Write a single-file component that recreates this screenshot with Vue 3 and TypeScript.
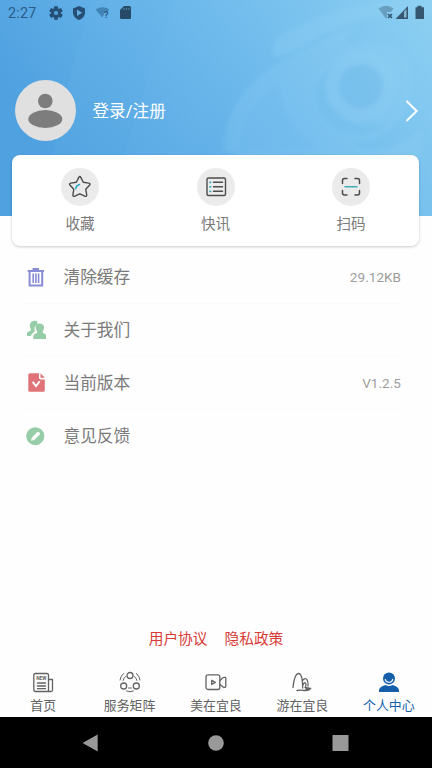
<script setup lang="ts">
interface Row { id: string; label: string; value?: string }
interface Item { id: string; label: string }

const shortcuts: Item[] = [
  { id: 'star', label: '收藏' },
  { id: 'news', label: '快讯' },
  { id: 'scan', label: '扫码' },
]
const rows: Row[] = [
  { id: 'trash', label: '清除缓存', value: '29.12KB' },
  { id: 'people', label: '关于我们' },
  { id: 'version', label: '当前版本', value: 'V1.2.5' },
  { id: 'feedback', label: '意见反馈' },
]
const tabs: Item[] = [
  { id: 'home', label: '首页' },
  { id: 'matrix', label: '服务矩阵' },
  { id: 'video', label: '美在宜良' },
  { id: 'travel', label: '游在宜良' },
  { id: 'me', label: '个人中心' },
]
const active = 'me'
</script>

<template>
  <div class="screen">
    <header class="hero">
      <svg class="art" viewBox="0 0 432 216" preserveAspectRatio="none" aria-hidden="true">
        <defs>
          <linearGradient id="sky" x1="0" y1="0.35" x2="1" y2="0">
            <stop offset="0" stop-color="#4fa1e0" />
            <stop offset="0.5" stop-color="#6db9ec" />
            <stop offset="1" stop-color="#8dd0f2" />
          </linearGradient>
          <linearGradient id="ray" x1="0" y1="0" x2="1" y2="0">
            <stop offset="0" stop-color="#8accf5" stop-opacity="0.08" />
            <stop offset="1" stop-color="#8accf5" stop-opacity="0" />
          </linearGradient>
          <filter id="soft"><feGaussianBlur stdDeviation="2" /></filter>
        </defs>
        <rect width="432" height="216" fill="url(#sky)" />
        <path d="M92 0H175L148 70L100 216H40L72 68Z" fill="url(#ray)" />
        <path d="M175 0H260L170 216H105L150 70Z" fill="url(#ray)" />
        <g filter="url(#soft)" opacity=".68">
          <path d="M274 57C271 42 278 33 296 29C326 10 360 3 412 0L432 0V14C390 8 350 20 318 38C301 48 288 55 274 57Z" fill="#98d5f6" opacity=".38" />
          <path d="M224 150C222 117 244 82 283 61C318 43 335 32 357 28C344 39 342 46 359 43C393 38 413 56 412 82C411 119 383 143 350 142C375 158 399 147 421 130V156H285C266 156 249 163 238 155Z" fill="#9ad5f7" opacity=".27" />
          <path d="M238 151C239 124 253 99 279 83C284 110 296 137 325 150Z" fill="#62afe6" opacity=".22" />
          <path d="M334 66C316 73 308 101 326 122C343 140 377 139 391 120C370 131 347 125 334 109C324 96 323 80 334 66Z" fill="#60b2e6" opacity=".26" />
          <circle cx="361" cy="86" r="29" fill="none" stroke="#a0d8f8" stroke-width="13" opacity=".22" />
          <circle cx="361" cy="86" r="22" fill="#63b1e5" opacity=".34" />
        </g>
      </svg>
      <div class="status">
        <span class="clock">2:27</span>
        <svg class="status-left" viewBox="48 0 90 26" width="90" height="26">
          <g transform="translate(56 13)" fill="#254f75">
            <rect v-for="a in [0, 60, 120]" :key="a" x="-2" y="-6.8" width="4" height="13.6" rx=".7" :transform="`rotate(${a})`" />
            <circle r="4.900" /><circle r="2.100" fill="#55a5e0" />
          </g>
          <path d="M79 6L85 8.400V12C85 16 82.600 18.700 79 20C75.400 18.700 73 16 73 12V8.400Z" fill="#254f75" />
          <path d="M77 9.600V16L82.200 12.800Z" fill="#65aee1" />
          <path d="M95.500 9.600Q102.500 4.700 109.500 9.600L107 12Q104.500 11 104 14L102.500 17.700Z" fill="#4384b8" />
          <text x="104" y="18" fill="#285a86" font-family="Roboto" font-size="9" font-weight="700">?</text>
          <path d="M124 6H129.500Q131 6 131 7.500V17.500Q131 19 129.500 19H121.500Q120 19 120 17.500V10Z" fill="#254966" />
          <path d="M124 7.800V10M126.500 7.800V10M129 7.800V10" stroke="#568bb2" stroke-width="1" />
        </svg>
        <svg class="status-right" viewBox="376 0 56 26" width="56" height="26">
          <path d="M378.500 8.500Q386 3 393.500 8.500L391 12H387V17.500L385.800 18.500Z" fill="#679fbe" />
          <path d="M388 14L392 18M392 14L388 18" stroke="#2c526d" stroke-width="1.500" />
          <path d="M408 6V19H395.500Z" fill="#355770" /><path d="M404 11.500L406.500 9V17.500H404Z" fill="#83b9d6" />
          <path d="M417.500 5.700H421.500V7.200H424V19H415.500V7.200H417.500Z" fill="#355770" />
        </svg>
      </div>
      <div class="profile">
        <svg class="avatar" viewBox="0 0 61 61"><circle cx="30.500" cy="30.500" r="30.500" fill="#e0e0e0" /><circle cx="30.300" cy="21" r="7.300" fill="#7d7d7d" /><ellipse cx="30.300" cy="39" rx="17" ry="9" fill="#7d7d7d" /></svg>
        <span class="login">登录/注册</span>
        <svg class="chevron" viewBox="0 0 14 24"><path d="M1.500 2L11.700 12L1.500 22" fill="none" stroke="#fff" stroke-width="1.900" /></svg>
      </div>
    </header>

    <section class="card">
      <div v-for="s in shortcuts" :key="s.id" class="shortcut">
        <svg viewBox="0 0 38 38" width="38" height="38" fill="none" stroke="#4c4c4c" stroke-width="1.400" stroke-linecap="round" stroke-linejoin="round">
          <circle cx="19" cy="19" r="19" fill="#ebebeb" stroke="none" />
          <g v-if="s.id === 'star'" transform="translate(.5 .6)">
            <path d="M17.200 9Q18.300 6.900 19.400 9L21.800 13.600L27.300 14.500Q29.400 15 28 16.700L24.300 20.700L25.200 26.200Q25.300 28.400 23.300 27.600L18.300 25.200L13.300 27.600Q11.300 28.400 11.400 26.200L12.300 20.700L8.600 16.700Q7.200 15 9.300 14.500L14.800 13.600Z" />
            <path d="M14.200 20Q14.800 16.800 18 16" stroke="#2faac4" stroke-width="1.500" />
          </g>
          <template v-else-if="s.id === 'news'">
            <rect x="10" y="10" width="18.500" height="17.500" rx="1.500" />
            <path d="M16.500 14.300H25.500M16.500 18.800H25.500M16.500 23.300H25.500" />
            <path d="M13 14.300H13.600M13 18.800H13.600M13 23.300H13.600" stroke="#2faac4" stroke-width="1.700" />
          </template>
          <template v-else>
            <path d="M10.500 15.500V12.500Q10.500 10.500 12.500 10.500H15M23 10.500H25.500Q27.500 10.500 27.500 12.500V15.500M10.500 22.500V25Q10.500 27 12.500 27H15M23 27H25.500Q27.500 27 27.500 25V22.500" stroke-width="1.500" />
            <path d="M13 18.700H25" stroke="#42afb8" />
          </template>
        </svg>
        <span>{{ s.label }}</span>
      </div>
    </section>

    <main class="list">
      <div v-for="r in rows" :key="r.id" class="row">
        <svg class="row-icon" viewBox="0 0 20 20" width="20" height="20">
          <g v-if="r.id === 'trash'" fill="none" stroke="#888cd4" stroke-width="1.600">
            <path d="M1.700 4H18M7.500 3.500V2H12V3.500M3.600 4.500V18.500H16.200V4.500" stroke-width="2" /><path d="M7.200 6.500V16M9.900 6.500V16M12.600 6.500V16" />
          </g>
          <g v-else-if="r.id === 'people'" fill="#96cda8">
            <path d="M7.500 1C11 0 12.200 1.700 11 4.500C8.500 6 8 8.400 8.900 10.600Q9 12.500 6.700 13Q5.300 14 5 16H1V13Q1 12 4 11Q5.800 10.300 4.500 8.300C3 5 4 2 7.500 1Z" />
            <path d="M13.500 3.600C18.200 3.600 19 7.500 17 10.700Q16 12.700 18 13.500Q20.500 14.300 20.500 16V19H7.300V16Q7.300 14.300 10 13.500Q12.100 12.700 10.700 10.700C8.600 7 9.500 3.600 13.500 3.600Z" />
          </g>
          <g v-else-if="r.id === 'version'">
            <path d="M4 .2H13V4.700Q13 6.400 14.700 6.400H18.800V17.200Q18.800 18.700 17.300 18.700H4Q2.300 18.700 2.300 17.200V1.700Q2.300 .2 4 .2ZM14.500 .2L18.800 4.700H14.500Z" fill="#df7378" />
            <path d="M6.700 8.900L10 13.200L13.700 8.200" fill="none" stroke="#fff" stroke-width="1.900" />
          </g>
          <g v-else>
            <circle cx="9.300" cy="9.200" r="9" fill="#96cda8" /><path d="M5 13.700L5.700 10.700L11.500 4.700Q14 4.700 14 7.200L8.200 12.900Z" fill="#fff" />
          </g>
        </svg>
        <span class="row-label">{{ r.label }}</span>
        <span v-if="r.value" class="row-value">{{ r.value }}</span>
      </div>
    </main>

    <div class="policies"><span>用户协议</span><span>隐私政策</span></div>

    <nav class="tabs">
      <div v-for="t in tabs" :key="t.id" class="tab" :class="{ active: t.id === active }">
        <svg viewBox="0 0 24 24" width="24" height="24" fill="none" stroke="currentColor" stroke-width="1.300" stroke-linecap="round" stroke-linejoin="round">
          <template v-if="t.id === 'home'">
            <path d="M17.500 20.500H4.500Q2.800 20.500 2.800 18.800V4Q2.800 2.500 4.300 2.500H16Q17.500 2.500 17.500 4V20.500H20Q21.500 20.500 21.500 19V8.500H17.500M6.500 12H14.500M6.500 15H14.500M6.500 17.700H14.500" />
            <text x="5.200" y="9" font-family="Roboto" font-size="4.800" font-weight="700" fill="currentColor" stroke="none">NEW</text>
          </template>
          <template v-else-if="t.id === 'matrix'">
            <circle cx="12" cy="4.500" r="3" /><circle cx="5.700" cy="15" r="3" /><circle cx="18.300" cy="15" r="3" />
            <path d="M5.500 2.500Q2.500 5 2 9M18.500 2.500Q21.500 5 22 9M7.500 5.500Q5.800 7 5 9.500M16.500 5.500Q18.200 7 19 9.500M8.500 20Q12 21.700 15.500 20M10.500 17H13.500" stroke-width="1" />
          </template>
          <template v-else-if="t.id === 'video'">
            <rect x="2" y="3.800" width="13.800" height="14.700" rx="2" /><path d="M7.700 9.300V13.500L11.300 11.400ZM16 9.500L19.300 6.500Q21.800 5.700 21.800 7.800V15Q21.800 17 19.300 16.200L16 13.500" />
          </template>
          <template v-else-if="t.id === 'travel'">
            <path d="M3 16.500Q4.500 2.500 8.700 2.500Q12.500 2.500 12.700 17M12.500 9.500Q15.500 6.200 17.200 9Q18.300 11 18 15M13 14Q14 11 15.500 12Q16.500 13 15.500 16M15 16.500L20.700 17.300L16 18M7 19.500Q10 18.700 13 19.300Q16.500 20 20 18.300" />
          </template>
          <template v-else>
            <circle cx="12" cy="7.600" r="6" fill="currentColor" stroke="none" /><path d="M8.300 8.300Q8.800 11.300 12 11.300Q15.200 11.300 15.700 8.300" stroke="#fff" stroke-width="1.100" />
            <path d="M2 21V19.500Q2 15.500 8.500 14Q12 16 15.500 14Q22 15.500 22 19.500V21Z" fill="currentColor" stroke="none" />
          </template>
        </svg>
        <span>{{ t.label }}</span>
      </div>
    </nav>

    <footer class="system">
      <svg viewBox="0 0 432 51"><path d="M82.500 26L97.700 17.500V34.500Z" fill="#999" /><circle cx="216" cy="26" r="7.800" fill="#999" /><rect x="332.500" y="18" width="16" height="16" rx=".5" fill="#999" /></svg>
    </footer>
  </div>
</template>

<style>
body { margin: 0; background: #fff; }
</style>
<style scoped>
.screen { width: 432px; height: 768px; display: flex; flex-direction: column; overflow: hidden; background: #fefefe; color: #7a7a7a; font-family: Roboto, "Noto Sans CJK SC", sans-serif; }
.hero { position: relative; height: 216px; flex: none; }
.art { position: absolute; inset: 0; width: 432px; height: 216px; }
.status { position: relative; height: 26px; display: flex; align-items: center; }
.clock { width: 40px; padding-left: 8px; color: #2b5c87; font-size: 14.300px; letter-spacing: .25px; }
.status-right { margin-left: auto; }
.profile { position: relative; display: flex; align-items: center; padding: 54px 13px 0 15px; }
.avatar { width: 61px; height: 61px; }
.login { margin: 2px 0 0 16.500px; color: #fff; font-size: 16.600px; line-height: 24px; }
.chevron { width: 14px; height: 24px; margin-left: auto; }
.card { position: relative; flex: none; height: 91px; margin: -61px 13px 0 12px; padding: 13px 0 0; box-sizing: border-box; display: grid; grid-template-columns: repeat(3, 135.500px); justify-content: center; border-radius: 8px; background: #fff; box-shadow: 0 1px 3px rgba(0, 0, 0, .2); }
.shortcut { display: flex; flex-direction: column; align-items: center; gap: 7px; font-size: 14.600px; line-height: 22px; }
.list { flex: none; padding: 5px 31px 0 26px; }
.row { height: 53px; box-sizing: border-box; display: flex; align-items: center; border-bottom: 1px solid #fafafa; }
.row:last-child { border-bottom: 0; }
.row-label { margin: 2px 0 0 17.500px; font-size: 16.700px; line-height: 24px; }
.row:last-child .row-label { margin-top: 0; }
.row-value { margin-left: auto; color: #9d9d9d; font-size: 13.500px; letter-spacing: .05px; }
.policies { margin-top: auto; height: 24px; display: flex; justify-content: center; gap: 17px; color: #d83a36; font-size: 14.700px; line-height: 24px; }
.tabs { flex: none; height: 50px; margin-top: 16px; padding-top: 4px; box-sizing: border-box; display: grid; grid-template-columns: repeat(5, 1fr); }
.tab { display: flex; flex-direction: column; align-items: center; gap: 1px; color: #626262; font-size: 12.900px; line-height: 20px; white-space: nowrap; }
.tab svg { flex: none; }
.tab.active { color: #145eaa; }
.system { flex: none; height: 51px; background: #000; }
.system svg { display: block; width: 432px; height: 51px; }
</style>
